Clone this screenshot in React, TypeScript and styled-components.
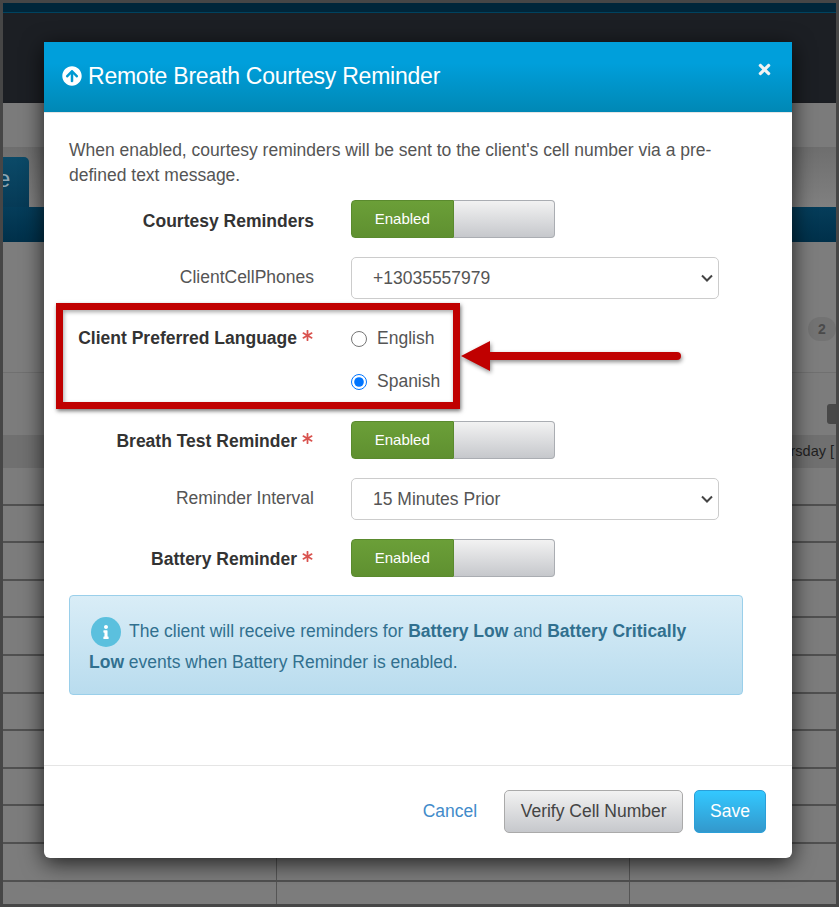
import React from 'react';
import styled, { createGlobalStyle } from 'styled-components';
import { FaArrowCircleUp, FaAsterisk, FaInfo, FaTimes } from 'react-icons/fa';

const GlobalStyle = createGlobalStyle`
  html, body {
    margin: 0;
    padding: 0;
    background: #464646;
  }
  * {
    box-sizing: border-box;
  }
`;

// dimmed page behind the dialog
const Frame = styled.div`
  position: relative;
  width: 839px;
  height: 907px;
  overflow: hidden;
  border: 3px solid #464646;
  background: #7c7c7c;
  font-family: 'Liberation Sans', Arial, sans-serif;
`;

const TopStrip = styled.div`
  height: 10px;
  background: #00263a;
  border-bottom: 1px solid #00435f;
`;

const NavBar = styled.div`
  height: 90px;
  background: #1c1f24;
`;

const SubBar = styled.div`
  height: 44px;
  background: #7b7b7b;
  box-shadow: 0 1px 3px rgba(0, 0, 0, 0.4);
`;

const TabArea = styled.div`
  height: 60px;
  padding-top: 10px;
  background: linear-gradient(#6e6e6e, #808080);
`;

const Tab = styled.div`
  width: 26px;
  height: 50px;
  padding-top: 8px;
  border-radius: 0 5px 0 0;
  background: linear-gradient(#0b4a68, #063a56);
  color: #8fa6b2;
  font-size: 24px;
  text-indent: -6px;
  overflow: hidden;
`;

const BlueBar = styled.div`
  height: 35px;
  background: linear-gradient(#053d5a, #00304a);
`;

const Panel = styled.div`
  height: 131px;
  display: flex;
  justify-content: flex-end;
  align-items: flex-start;
  padding-top: 75px;
  border-bottom: 1px solid #707070;
  background: #7d7d7d;
`;

const CountBadge = styled.span`
  width: 28px;
  height: 24px;
  border-radius: 12px;
  background: #737373;
  color: #4a4a4a;
  font-size: 14px;
  font-weight: 700;
  line-height: 24px;
  text-align: center;
`;

const Toolbar = styled.div`
  height: 62px;
  display: flex;
  justify-content: flex-end;
  padding-top: 31px;
`;

const ToolButton = styled.span`
  width: 9px;
  height: 20px;
  border-radius: 3px 0 0 3px;
  background: #484848;
`;

const DayBand = styled.div`
  height: 33px;
  display: flex;
  justify-content: flex-end;
  padding: 8px 2px 0 0;
  background: #707070;
  color: #1f1f1f;
  font-size: 14.5px;
  white-space: nowrap;
`;

const TableRow = styled.div`
  height: 37.6px;
  display: grid;
  grid-template-columns: 274px 353px 1fr;
  border-bottom: 2px solid #505050;
`;

const TableCell = styled.div`
  border-right: 1px solid #555;
  &:last-child {
    border-right: none;
  }
`;

// dialog
const Dialog = styled.div`
  position: absolute;
  top: 39px;
  left: 41px;
  width: 748px;
  height: 816px;
  display: flex;
  flex-direction: column;
  border-radius: 0 0 6px 6px;
  background: #fff;
  box-shadow: 0 5px 22px rgba(0, 0, 0, 0.75);
`;

const Header = styled.header`
  height: 71px;
  display: flex;
  align-items: center;
  justify-content: space-between;
  padding: 0 19px 2px 18px;
  border-bottom: 1px solid #e5e5e5;
  background: linear-gradient(#009fdb 30%, #0088b5);
  color: #fff;
`;

const Title = styled.h4`
  display: flex;
  align-items: center;
  gap: 6px;
  margin: 0;
  font-size: 23px;
  font-weight: 400;
  letter-spacing: -0.23px;
`;

const CloseButton = styled.span`
  display: flex;
  margin-bottom: 13px;
  color: #f2f2f2;
  font-size: 17px;
`;

const Body = styled.div`
  flex: 1;
  padding: 25px 49px 0 25px;
  color: #555;
  font-size: 17.5px;
`;

const Intro = styled.p`
  margin: 0 0 12px;
  line-height: 25px;
`;

const Form = styled.div`
  display: grid;
  grid-template-columns: 245px 368px;
  column-gap: 37px;
  row-gap: 19px;
  align-items: center;
`;

const Label = styled.label<{ $strong?: boolean; $pad?: number }>`
  display: flex;
  justify-content: flex-end;
  align-items: flex-start;
  gap: 5px;
  padding-top: ${(p) => p.$pad ?? 2}px;
  margin-top: ${(p) => (p.$strong ? 0 : -4)}px;
  color: ${(p) => (p.$strong ? '#333' : '#555')};
  font-size: 17.5px;
  font-weight: ${(p) => (p.$strong ? 700 : 400)};
`;

const TopLabel = styled(Label)`
  align-self: start;
  padding-top: 10px;
`;

const Required = styled.span`
  display: flex;
  margin: 2px 1px 0 0;
  color: #d9534f;
  font-size: 11px;
`;

const Toggle = styled.div`
  width: 204px;
  height: 38px;
  display: flex;
`;

const ToggleOn = styled.span`
  flex: 1;
  border: 1px solid #5a8a2e;
  border-radius: 4px 0 0 4px;
  background: linear-gradient(#6b9f38, #5f9030);
  color: #fff;
  font-size: 15px;
  line-height: 36px;
  text-align: center;
`;

const ToggleOff = styled.span`
  flex: 1;
  border: 1px solid #aaadb2;
  border-left: none;
  border-radius: 0 4px 4px 0;
  background: linear-gradient(#f2f2f2, #c6c8cc);
`;

const SelectWrap = styled.div`
  position: relative;
  width: 368px;
  height: 42px;
`;

const Select = styled.select`
  width: 100%;
  height: 100%;
  padding: 0 21px;
  appearance: none;
  border: 1px solid #ccc;
  border-radius: 5px;
  background: #fff;
  color: #555;
  font-family: inherit;
  font-size: 17.5px;
`;

const Chevron = styled.svg`
  position: absolute;
  top: 17px;
  right: 6px;
  pointer-events: none;
`;

const RadioGroup = styled.div`
  display: flex;
  flex-direction: column;
  margin: -1px 0;
`;

const RadioOption = styled.label`
  height: 43px;
  display: flex;
  align-items: center;
  gap: 10px;
  font-size: 17.5px;
`;

const Radio = styled.input`
  width: 16px;
  height: 16px;
  margin: 0;
`;

const Alert = styled.div`
  width: 674px;
  height: 100px;
  margin-top: 18px;
  padding: 20px 19px 0;
  border: 1px solid #9acfea;
  border-radius: 4px;
  background: linear-gradient(#d9edf7, #b9dcee);
  color: #31708f;
  font-size: 17.5px;
  line-height: 31px;
`;

const InfoIcon = styled.span`
  display: inline-flex;
  align-items: center;
  justify-content: center;
  width: 30px;
  height: 30px;
  margin: 0 8px 0 2px;
  border-radius: 50%;
  background: #5bc0de;
  color: #fff;
  font-size: 14px;
  vertical-align: middle;
`;

const Footer = styled.footer`
  height: 93px;
  display: flex;
  justify-content: flex-end;
  align-items: flex-start;
  gap: 11px;
  padding: 24px 26px 0 0;
  border-top: 1px solid #e5e5e5;
`;

const LinkButton = styled.a`
  margin-right: 16px;
  color: #428bca;
  font-size: 17.5px;
  line-height: 43px;
`;

const Button = styled.button<{ $primary?: boolean }>`
  height: 43px;
  padding: 0 ${(p) => (p.$primary ? 15 : 15.5)}px;
  border: 1px solid ${(p) => (p.$primary ? '#2b9fd8' : '#aaa')};
  border-radius: 5px;
  background: ${(p) =>
    p.$primary
      ? 'linear-gradient(#33c8ff, #3398cc)'
      : 'linear-gradient(#f2f2f2, #c6c8cc)'};
  color: ${(p) => (p.$primary ? '#fff' : '#444')};
  font-family: inherit;
  font-size: 17.5px;
`;

// annotations on top of the screenshot
const Callout = styled.div`
  position: absolute;
  top: 300px;
  left: 53px;
  width: 404px;
  height: 106px;
  border: 7px solid #c00000;
  box-shadow: 1px 2px 4px rgba(0, 0, 0, 0.55), inset 1px 2px 4px rgba(0, 0, 0, 0.35);
`;

const Arrow = styled.svg`
  position: absolute;
  top: 336px;
  left: 457px;
  overflow: visible;
  filter: drop-shadow(1px 2px 2px rgba(0, 0, 0, 0.45));
`;

const SelectField = ({ value }: { value: string }) => (
  <SelectWrap>
    <Select defaultValue={value}>
      <option>{value}</option>
    </Select>
    <Chevron width="12" height="8" viewBox="0 0 12 8">
      <path d="M1 1.5 L6 6.5 L11 1.5" fill="none" stroke="#444" strokeWidth="2" />
    </Chevron>
  </SelectWrap>
);

const App = () => {
  const rows = Array.from({ length: 12 }, (_, i) => i);

  return (
    <>
      <GlobalStyle />
      <Frame>
        <TopStrip />
        <NavBar />
        <SubBar />
        <TabArea>
          <Tab>e</Tab>
        </TabArea>
        <BlueBar />
        <Panel>
          <CountBadge>2</CountBadge>
        </Panel>
        <Toolbar>
          <ToolButton />
        </Toolbar>
        <DayBand>Thursday [</DayBand>
        {rows.map((row) => (
          <TableRow key={row}>
            <TableCell />
            <TableCell />
            <TableCell />
          </TableRow>
        ))}

        <Dialog>
          <Header>
            <Title>
              <FaArrowCircleUp size={20} />
              Remote Breath Courtesy Reminder
            </Title>
            <CloseButton>
              <FaTimes />
            </CloseButton>
          </Header>
          <Body>
            <Intro>
              When enabled, courtesy reminders will be sent to the client's cell number via a
              pre-defined text message.
            </Intro>
            <Form>
              <Label $strong $pad={4}>
                Courtesy Reminders
              </Label>
              <Toggle>
                <ToggleOn>Enabled</ToggleOn>
                <ToggleOff />
              </Toggle>

              <Label>ClientCellPhones</Label>
              <SelectField value="+13035557979" />

              <TopLabel $strong>
                Client Preferred Language
                <Required>
                  <FaAsterisk />
                </Required>
              </TopLabel>
              <RadioGroup>
                <RadioOption>
                  <Radio type="radio" name="language" />
                  English
                </RadioOption>
                <RadioOption>
                  <Radio type="radio" name="language" defaultChecked />
                  Spanish
                </RadioOption>
              </RadioGroup>

              <Label $strong>
                Breath Test Reminder
                <Required>
                  <FaAsterisk />
                </Required>
              </Label>
              <Toggle>
                <ToggleOn>Enabled</ToggleOn>
                <ToggleOff />
              </Toggle>

              <Label>Reminder Interval</Label>
              <SelectField value="15 Minutes Prior" />

              <Label $strong>
                Battery Reminder
                <Required>
                  <FaAsterisk />
                </Required>
              </Label>
              <Toggle>
                <ToggleOn>Enabled</ToggleOn>
                <ToggleOff />
              </Toggle>
            </Form>
            <Alert>
              <InfoIcon>
                <FaInfo />
              </InfoIcon>
              The client will receive reminders for <b>Battery Low</b> and{' '}
              <b>Battery Critically</b> <b>Low</b> events when Battery Reminder is enabled.
            </Alert>
          </Body>
          <Footer>
            <LinkButton>Cancel</LinkButton>
            <Button>Verify Cell Number</Button>
            <Button $primary>Save</Button>
          </Footer>
        </Dialog>

        <Callout />
        <Arrow width="224" height="36" viewBox="0 0 224 36">
          <path d="M1 17 L30 2 L30 13 L217 13 A4 4 0 0 1 217 21 L30 21 L30 32 Z" fill="#c00000" />
        </Arrow>
      </Frame>
    </>
  );
};

export default App;
